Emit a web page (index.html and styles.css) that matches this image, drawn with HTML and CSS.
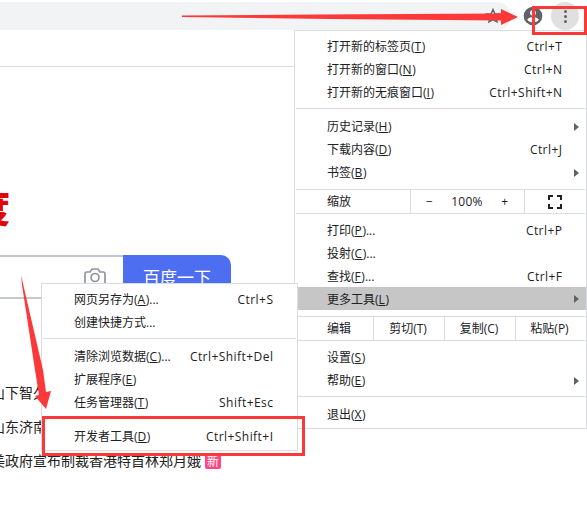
FILE: index.html
```html
<!DOCTYPE html>
<html lang="zh-CN">
<head>
<meta charset="utf-8">
<title>百度一下</title>
<link rel="stylesheet" href="styles.css">
</head>
<body>
<div class="toolbar">
  <div class="omnibox"><svg class="star" width="16" height="16" viewBox="0 0 16 16"><path d="M8 1.500l1.900 4.200 4.600.5-3.400 3.100.9 4.500L8 11.500l-4 2.300.9-4.500L1.500 6.200l4.600-.5z" fill="none" stroke="#5f6368" stroke-width="1.500"/></svg></div>
  <svg class="avatar" width="20" height="20" viewBox="0 0 20 20"><circle cx="10" cy="10" r="9.300" fill="#5f6368"/><circle cx="10" cy="6.800" r="2.900" fill="#fff"/><path d="M4.200 13.700c1.200-1.900 3.500-2.500 5.800-2.500s4.600.6 5.800 2.500C14.500 15.500 12.400 16.500 10 16.500s-4.500-1-5.800-2.800z" fill="#fff"/></svg>
  <div class="more"><i></i><i></i><i></i></div>
</div>
<div class="bookmarks"></div>
<main class="page">
  <div class="logo">度</div>
  <div class="search">
    <div class="field"><svg width="22" height="20" viewBox="0 0 22 20" fill="none" stroke="#9195a3" stroke-width="1.700"><path d="M3 4h3l2-3h6l2 3h3q2 0 2 2v10q0 2-2 2H3q-2 0-2-2V6q0-2 2-2z"/><circle cx="11" cy="9.500" r="4"/></svg></div>
    <div class="submit">百度一下</div>
  </div>
  <div class="news">
    <div>山下智久</div>
    <div>山东济南</div>
    <div>美政府宣布制裁香港特首林郑月娥<b>新</b></div>
  </div>
</main>

<div class="menu main-menu">
  <div class="group">
    <div class="row"><span>打开新的标签页(<u>T</u>)</span><kbd>Ctrl+T</kbd></div>
    <div class="row"><span>打开新的窗口(<u>N</u>)</span><kbd>Ctrl+N</kbd></div>
    <div class="row"><span>打开新的无痕窗口(<u>I</u>)</span><kbd>Ctrl+Shift+N</kbd></div>
  </div>
  <div class="group history">
    <div class="row sub"><span>历史记录(<u>H</u>)</span></div>
    <div class="row"><span>下载内容(<u>D</u>)</span><kbd>Ctrl+J</kbd></div>
    <div class="row sub"><span>书签(<u>B</u>)</span></div>
  </div>
  <div class="cells zoom">
    <span class="label">缩放</span>
    <div class="level"><span>−</span><span>100%</span><span>+</span></div>
    <div class="full"><svg width="14" height="14" viewBox="0 0 14 14" fill="none" stroke="#202124" stroke-width="2"><path d="M1 5V1h4M9 1h4v4M13 9v4H9M5 13H1V9"/></svg></div>
  </div>
  <div class="group tools">
    <div class="row"><span>打印(<u>P</u>)...</span><kbd>Ctrl+P</kbd></div>
    <div class="row"><span>投射(<u>C</u>)...</span></div>
    <div class="row"><span>查找(<u>F</u>)...</span><kbd>Ctrl+F</kbd></div>
    <div class="row sub active"><span>更多工具(<u>L</u>)</span></div>
  </div>
  <div class="cells edit">
    <span class="label">编辑</span>
    <span>剪切(T)</span>
    <span>复制(C)</span>
    <span>粘贴(P)</span>
  </div>
  <div class="group settings">
    <div class="row"><span>设置(<u>S</u>)</span></div>
    <div class="row sub"><span>帮助(<u>E</u>)</span></div>
  </div>
  <div class="group exit">
    <div class="row"><span>退出(<u>X</u>)</span></div>
  </div>
</div>

<div class="menu sub-menu">
  <div class="group">
    <div class="row"><span>网页另存为(<u>A</u>)...</span><kbd>Ctrl+S</kbd></div>
    <div class="row"><span>创建快捷方式...</span></div>
  </div>
  <div class="group">
    <div class="row"><span>清除浏览数据(<u>C</u>)...</span><kbd>Ctrl+Shift+Del</kbd></div>
    <div class="row"><span>扩展程序(<u>E</u>)</span></div>
    <div class="row"><span>任务管理器(<u>T</u>)</span><kbd>Shift+Esc</kbd></div>
  </div>
  <div class="group">
    <div class="row"><span>开发者工具(<u>D</u>)</span><kbd>Ctrl+Shift+I</kbd></div>
  </div>
</div>

<svg class="marks" width="587" height="516" viewBox="0 0 587 516">
  <g fill="#fd3838">
    <path d="M182 15.500L318 14.500 501 13.500V9L518 17 501 25V20.500L330 19 182 17z"/>
    <path d="M21 275L43 370 46 392 51 391 46 409 35 396 39 395 35 370 22 285z"/>
  </g>
  <g fill="none" stroke="#fd3838" stroke-width="3">
    <path d="M533.500 7.500h52v26h-52z"/>
    <path d="M43.500 417.500h260v37h-260z"/>
  </g>
</svg>
</body>
</html>
```
FILE: styles.css
```css
* { box-sizing: border-box; }
body {
  margin: 0;
  width: 587px;
  height: 516px;
  position: relative;
  overflow: hidden;
  background: #fff;
  color: #202124;
  font: 12px/23px "Open Sans", "Noto Sans CJK SC", sans-serif;
}
svg { display: block; flex: none; }

.toolbar { display: flex; align-items: center; height: 30px; padding-top: 2px; }
.omnibox {
  width: 511px;
  height: 28px;
  padding-right: 10px;
  display: flex;
  align-items: center;
  justify-content: flex-end;
  background: #f1f3f4;
  border-radius: 0 14px 14px 0;
}
.avatar { margin-left: 12px; }
.more {
  width: 28px;
  height: 28px;
  margin-left: 8px;
  border-radius: 50%;
  background: #e0e0e0;
  display: flex;
  flex-direction: column;
  align-items: center;
  justify-content: center;
  gap: 2px;
}
.more i { width: 3px; height: 3px; border-radius: 50%; background: #5f6368; }
.bookmarks { height: 37px; border-bottom: 1px solid #dadce0; }

.page { overflow: hidden; }
.logo {
  width: 10px;
  height: 38px;
  margin-top: 120px;
  display: flex;
  justify-content: flex-end;
  font: 900 38px/38px "Noto Sans CJK SC", sans-serif;
  color: #e10601;
}
.search { display: flex; height: 44px; margin-top: 30px; }
.field {
  width: 123px;
  padding: 11px 17px 0 0;
  display: flex;
  justify-content: flex-end;
  border: solid #c4c7ce;
  border-width: 2px 0;
}
.submit {
  width: 108px;
  border-radius: 0 10px 10px 0;
  background: #4e6ef2;
  color: #fff;
  font: 17px/44px "Noto Sans CJK SC", sans-serif;
  text-align: center;
}
.news {
  margin: 76px 0 0 -9px;
  font: 14px/34px "Noto Sans CJK SC", sans-serif;
  color: #222;
}
.news div { display: flex; align-items: center; height: 34px; white-space: nowrap; }
.news b {
  width: 16px;
  height: 16px;
  margin: 1px 0 0 4px;
  border-radius: 2px;
  background: #ff4683;
  color: #fff;
  font-weight: 400;
  font-size: 12px;
  line-height: 16px;
  text-align: center;
}

.menu { position: absolute; background: #fff; border: 1px solid #dadce0; }
.main-menu { left: 294px; top: 30px; width: 293px; height: 399px; }
.sub-menu { left: 41px; top: 283px; width: 257px; height: 168px; }
.group { padding: 4px 0; }
.group + .group { padding-top: 6px; border-top: 1px solid #dadce0; margin: 0 1px; }
.main-menu .history { padding-bottom: 5px; }
.row { display: flex; justify-content: space-between; height: 23px; padding: 0 24px 0 32px; white-space: nowrap; }
.group + .group .row { padding: 0 23px 0 31px; }
u { letter-spacing: .6px; text-underline-offset: 1px; text-decoration-thickness: 1px; }
kbd { font: inherit; letter-spacing: .45px; margin-right: -.45px; }
.row.sub::after {
  content: "";
  align-self: center;
  margin-right: -17px;
  border: solid transparent;
  border-width: 4px 0 4px 5px;
  border-left-color: #5f6368;
}

.cells {
  display: grid;
  height: 25px;
  margin: 0 1px;
  border: solid #dadce0;
  border-width: 1px 0;
}
.cells > * { text-align: center; border-left: 1px solid #dadce0; }
.cells > .label { border: 0; text-align: left; padding-left: 31px; }
.zoom { grid-template-columns: 114px 114px 1fr; }
.level { display: flex; justify-content: space-between; padding: 0 16px 0 15px; }
.level span:nth-child(2) { letter-spacing: .3px; }
.full { display: flex; align-items: center; justify-content: center; }
.main-menu .tools { padding: 4px 0 6px; margin: 0 1px; }
.main-menu .tools .row { padding: 0 23px 0 31px; line-height: 25px; }
.main-menu .tools .active { margin: 0 -1px; padding: 0 24px 0 32px; background: #c6c6c6; }
.edit { grid-template-columns: 77px 71px 71px 1fr; line-height: 24px; }
.edit span:not(.label) { padding-right: 2px; }
.main-menu .settings { padding-top: 5px; }

.marks { position: absolute; left: 0; top: 0; }
```
